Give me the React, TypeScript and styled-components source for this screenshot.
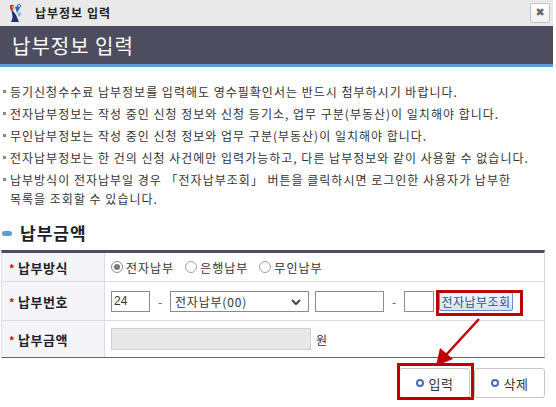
import React from "react";
import styled, { createGlobalStyle } from "styled-components";

const GlobalStyle = createGlobalStyle`
  html, body {
    margin: 0;
    padding: 0;
    background: #ffffff;
  }
  body {
    font-family: "Noto Sans CJK KR", "Noto Sans", sans-serif;
    color: #333;
  }
`;

const Frame = styled.div`
  position: relative;
  width: 553px;
  height: 407px;
  background: #fff;
`;

const TitleBar = styled.div`
  height: 26px;
  display: flex;
  align-items: center;
  background: #e9e9e9;
  padding-left: 8px;
  box-sizing: border-box;
`;

const TitleText = styled.span`
  margin-left: 12px;
  font-size: 12px;
  font-weight: 700;
  letter-spacing: 1px;
  color: #222;
  line-height: 1;
`;

const CloseButton = styled.button`
  margin-left: auto;
  margin-right: 3px;
  width: 20px;
  height: 20px;
  padding: 0;
  border: 1px solid #c4c4c4;
  border-radius: 2px;
  background: linear-gradient(#fdfdfd, #f0f0f0);
  color: #666;
  font-size: 11px;
  font-weight: 700;
  line-height: 18px;
  font-family: "DejaVu Sans", sans-serif;
`;

const Header = styled.h1`
  margin: 0;
  height: 38px;
  display: flex;
  align-items: center;
  padding-left: 12px;
  background: #4e4d5f;
  border-bottom: 3px solid #5b9dd6;
  color: #fff;
  font-size: 20px;
  font-weight: 400;
  letter-spacing: 1px;
`;

const NoticeList = styled.ul`
  list-style: none;
  margin: 0;
  padding: 15px 15px 0 0;
`;

const NoticeItem = styled.li`
  position: relative;
  padding-left: 10px;
  margin-bottom: 3px;
  font-size: 12px;
  line-height: 19px;
  letter-spacing: 1px;
  word-break: keep-all;
  color: #333;

  &::before {
    content: "";
    position: absolute;
    left: 3px;
    top: 8px;
    width: 3px;
    height: 3px;
    background: #8a8a8a;
  }
`;

const SectionTitle = styled.h2`
  margin: 15px 0 7px 0;
  display: flex;
  align-items: center;
  gap: 8px;
  padding-left: 2px;
  font-size: 17px;
  line-height: 20px;
  font-weight: 700;
  letter-spacing: 1px;
  color: #1d1d2b;

  &::before {
    content: "";
    width: 10px;
    height: 5px;
    border-radius: 3px;
    background: #5b9dd6;
  }
`;

const Table = styled.div`
  margin-left: 1px;
  width: 544px;
  border-top: 3px solid #4e4d5f;
  border-bottom: 1px solid #666;
  border-right: 1px solid #d8d8d8;
  border-left: 1px solid #e0e0e0;
  box-sizing: border-box;
`;

const Row = styled.div<{ $h: number; $last?: boolean }>`
  display: grid;
  grid-template-columns: 103px 1fr;
  height: ${(p) => p.$h}px;
  border-bottom: ${(p) => (p.$last ? "none" : "1px solid #dcdcdc")};
`;

const Label = styled.div`
  display: flex;
  align-items: center;
  gap: 3px;
  padding-left: 7px;
  background: #f5f5f9;
  border-right: 1px solid #dcdcdc;
  font-size: 13px;
  font-weight: 700;
  letter-spacing: 0.5px;
  color: #1d1d2b;
`;

const Star = styled.span`
  color: #e00000;
  font-size: 11px;
  font-weight: 700;
  margin-top: 2px;
`;

const Cell = styled.div`
  display: flex;
  align-items: center;
  padding-left: 6px;
  font-size: 12px;
  color: #333;
`;

const RadioLabel = styled.label`
  display: flex;
  align-items: center;
  gap: 3px;
  margin-right: 11px;
  letter-spacing: 1px;
`;

const Radio = styled.input`
  appearance: none;
  margin: 0;
  width: 12px;
  height: 12px;
  border-radius: 50%;
  border: 1px solid #a0a0a0;
  background: #fff;
  box-sizing: border-box;
  position: relative;

  &:checked {
    border-color: #8a8a8a;
  }
  &:checked::after {
    content: "";
    position: absolute;
    left: 2px;
    top: 2px;
    width: 6px;
    height: 6px;
    border-radius: 50%;
    background: #7a7a7a;
  }
`;

const TextBox = styled.input<{ $w: number }>`
  width: ${(p) => p.$w}px;
  height: 21px;
  box-sizing: border-box;
  border: 1px solid #8c8c8c;
  padding: 0 2px;
  font-family: "Liberation Sans", sans-serif;
  font-size: 12px;
  color: #333;
  background: #fff;
  outline: none;

  &:disabled {
    background: #e8e8e8;
    border-color: #cfcfcf;
    height: 22px;
  }
`;

const Dash = styled.span`
  width: 20px;
  text-align: center;
  color: #555;
`;

const SelectWrap = styled.div`
  position: relative;
  width: 139px;
  height: 21px;
  margin-right: 6px;
`;

const Select = styled.select`
  appearance: none;
  width: 100%;
  height: 100%;
  box-sizing: border-box;
  border: 1px solid #8c8c8c;
  background: #fff;
  padding: 0 4px;
  font-family: "Noto Sans CJK KR", sans-serif;
  font-size: 12px;
  letter-spacing: 0.8px;
  color: #333;
  border-radius: 0;
`;

const Chevron = styled.svg`
  position: absolute;
  right: 8px;
  top: 8px;
  pointer-events: none;
`;

const SearchButton = styled.button`
  margin-left: 5px;
  height: 19px;
  width: 74px;
  padding: 0;
  border: 1px solid #6f8fc7;
  border-radius: 2px;
  background: linear-gradient(#f3f7fd, #d6e4f6);
  color: #2f4f8c;
  font-family: "Noto Sans CJK KR", sans-serif;
  font-size: 12px;
  letter-spacing: 0.5px;
  line-height: 17px;
`;

const Unit = styled.span`
  margin-left: 5px;
  font-size: 12px;
`;

const ButtonRow = styled.div`
  display: flex;
  justify-content: flex-end;
  gap: 4px;
  margin-top: 10px;
  padding-right: 8px;
`;

const ActionButton = styled.button`
  width: 71px;
  height: 30px;
  display: flex;
  align-items: center;
  justify-content: center;
  gap: 5px;
  border: 1px solid #c6c6c6;
  border-radius: 3px;
  background: #fff;
  font-family: "Noto Sans CJK KR", sans-serif;
  font-size: 13px;
  letter-spacing: 0.5px;
  color: #333;
  padding: 0;

  &::before {
    content: "";
    width: 4px;
    height: 4px;
    border-radius: 50%;
    border: 2px solid #4a6cb3;
  }
`;

const Highlight = styled.div<{ $x: number; $y: number; $w: number; $h: number }>`
  position: absolute;
  left: ${(p) => p.$x}px;
  top: ${(p) => p.$y}px;
  width: ${(p) => p.$w}px;
  height: ${(p) => p.$h}px;
  border: 3px solid #c00000;
  box-sizing: border-box;
  pointer-events: none;
`;

const ArrowLayer = styled.svg`
  position: absolute;
  left: 0;
  top: 0;
  pointer-events: none;
`;

const Logo = () => (
  <svg width="15" height="20" viewBox="0 0 15 20">
    <path d="M2 2 L6 2 L5 8 L2 6 Z" fill="#d2322d" />
    <path d="M3 7 Q7 9 8 12 L11 19 L3 19 Q6 14 3 7 Z" fill="#1e2f7a" />
    <path d="M7 4 Q10 2 12 5 L9 10 Z" fill="#2f6cc0" />
    <circle cx="11" cy="3" r="1.6" fill="none" stroke="#2f6cc0" strokeWidth="1" />
    <path d="M9 11 L13 9 L12 14 Z" fill="#6fb0e6" />
    <circle cx="5" cy="4" r="1" fill="#f2c12e" />
  </svg>
);

const notices = [
  "등기신청수수료 납부정보를 입력해도 영수필확인서는 반드시 첨부하시기 바랍니다.",
  "전자납부정보는 작성 중인 신청 정보와 신청 등기소, 업무 구분(부동산)이 일치해야 합니다.",
  "무인납부정보는 작성 중인 신청 정보와 업무 구분(부동산)이 일치해야 합니다.",
  "전자납부정보는 한 건의 신청 사건에만 입력가능하고, 다른 납부정보와 같이 사용할 수 없습니다.",
  "납부방식이 전자납부일 경우 「전자납부조회」 버튼을 클릭하시면 로그인한 사용자가 납부한 목록을 조회할 수 있습니다.",
];

export default function App() {
  return (
    <Frame>
      <GlobalStyle />
      <TitleBar>
        <Logo />
        <TitleText>납부정보 입력</TitleText>
        <CloseButton>✖</CloseButton>
      </TitleBar>
      <Header>납부정보 입력</Header>

      <NoticeList>
        {notices.map((n) => (
          <NoticeItem key={n}>{n}</NoticeItem>
        ))}
      </NoticeList>

      <SectionTitle>납부금액</SectionTitle>

      <Table>
        <Row $h={28}>
          <Label>
            <Star>*</Star>납부방식
          </Label>
          <Cell>
            <RadioLabel>
              <Radio type="radio" name="method" defaultChecked />
              전자납부
            </RadioLabel>
            <RadioLabel>
              <Radio type="radio" name="method" />
              은행납부
            </RadioLabel>
            <RadioLabel>
              <Radio type="radio" name="method" />
              무인납부
            </RadioLabel>
          </Cell>
        </Row>
        <Row $h={38}>
          <Label>
            <Star>*</Star>납부번호
          </Label>
          <Cell>
            <TextBox $w={39} defaultValue="24" />
            <Dash>-</Dash>
            <SelectWrap>
              <Select defaultValue="00">
                <option value="00">전자납부(00)</option>
              </Select>
              <Chevron width="10" height="7" viewBox="0 0 10 7">
                <path d="M1 1 L5 5 L9 1" fill="none" stroke="#444" strokeWidth="2" />
              </Chevron>
            </SelectWrap>
            <TextBox $w={69} />
            <Dash>-</Dash>
            <TextBox $w={30} />
            <SearchButton>전자납부조회</SearchButton>
          </Cell>
        </Row>
        <Row $h={36} $last>
          <Label>
            <Star>*</Star>납부금액
          </Label>
          <Cell>
            <TextBox $w={200} disabled />
            <Unit>원</Unit>
          </Cell>
        </Row>
      </Table>

      <ButtonRow>
        <ActionButton>입력</ActionButton>
        <ActionButton>삭제</ActionButton>
      </ButtonRow>

      <Highlight $x={436} $y={290} $w={87} $h={26} />
      <Highlight $x={397} $y={363} $w={77} $h={37} />
      <ArrowLayer width="556" height="407">
        <line x1="479" y1="319" x2="446" y2="355" stroke="#c00000" strokeWidth="2.5" />
        <polygon points="436,366 440,348 453,359" fill="#c00000" />
      </ArrowLayer>
    </Frame>
  );
}
